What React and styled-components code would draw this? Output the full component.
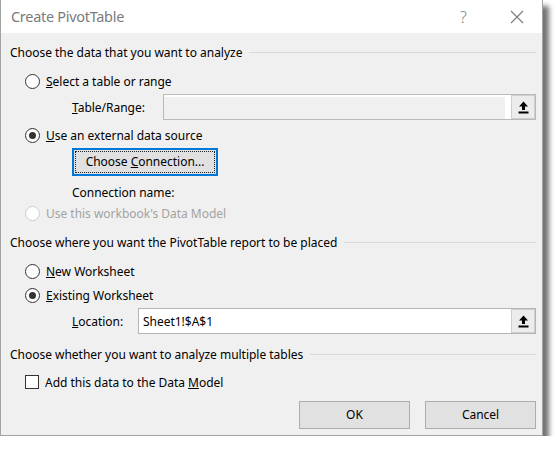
import React from "react";
import styled, { createGlobalStyle } from "styled-components";

const Global = createGlobalStyle`
  html, body { margin: 0; padding: 0; background: #ffffff; }
  body { font-family: "Noto Sans", "Open Sans", sans-serif; }
`;

const Dialog = styled.div`
  width: 541px;
  height: 435px;
  background: #f0f0f0;
  border: 1px solid #a3a3a3;
  border-top: none;
  box-shadow: 6px 6px 5px rgba(0, 0, 0, 0.55);
  display: flex;
  flex-direction: column;
  font-size: 12px;
  color: #000;
`;

const TitleBar = styled.div`
  height: 33px;
  background: #ffffff;
  display: flex;
  align-items: center;
  padding-left: 10px;
  flex-shrink: 0;
`;

const Title = styled.div`
  flex: 1;
  font-size: 14.5px;
  color: #7b7b7b;
  letter-spacing: -0.3px;
  padding-bottom: 1px;
`;

const Help = styled.div`
  width: 8px;
  font-size: 16px;
  color: #7b7b7b;
  margin-right: 42px;
  font-weight: 300;
`;

const Close = styled.div`
  width: 14px;
  height: 14px;
  margin-right: 18px;
  display: flex;
`;

const Body = styled.div`
  display: flex;
  flex-direction: column;
  padding: 0 6px 0 9px;
  letter-spacing: -0.02px;
`;

const SectionHeader = styled.div`
  height: 20px;
  margin-top: ${(p) => p.$mt}px;
  display: flex;
  align-items: center;
  gap: 7px;
  &::after {
    content: "";
    flex: 1;
    height: 1px;
    background: #dadada;
    margin-top: 1px;
  }
`;

const OptionRow = styled.label`
  height: 20px;
  margin-top: ${(p) => p.$mt}px;
  padding-left: 15px;
  display: flex;
  align-items: center;
  gap: 6px;
  color: ${(p) => (p.$disabled ? "#a3a3a3" : "#000")};
`;

const Radio = styled.span`
  width: 13px;
  height: 13px;
  border-radius: 50%;
  border: 1px solid ${(p) => (p.$disabled ? "#cccccc" : "#333333")};
  background: #ffffff;
  display: flex;
  align-items: center;
  justify-content: center;
  flex-shrink: 0;
  &::after {
    content: "";
    width: 7px;
    height: 7px;
    border-radius: 50%;
    background: #333333;
    display: ${(p) => (p.$checked ? "block" : "none")};
  }
`;

const Checkbox = styled.span`
  width: 12px;
  height: 12px;
  border: 1px solid #333333;
  background: #ffffff;
  flex-shrink: 0;
`;

const FieldRow = styled.div`
  height: 26px;
  margin-top: ${(p) => p.$mt}px;
  padding-left: 62px;
  display: flex;
  align-items: center;
`;

const FieldLabel = styled.span`
  width: ${(p) => p.$w}px;
  flex-shrink: 0;
`;

const InputFrame = styled.div`
  flex: 1;
  height: 26px;
  box-sizing: border-box;
  border: 1px solid ${(p) => (p.$disabled ? "#b9b9b9" : "#b4b4b4")};
  background: ${(p) => (p.$disabled ? "#f0f0f0" : "#ffffff")};
  display: flex;
  align-items: stretch;
`;

const InputText = styled.div`
  flex: 1;
  display: flex;
  align-items: center;
  padding-left: 4px;
  border-right: ${(p) => (p.$disabled ? "6px solid #ffffff" : "none")};
  border-top: ${(p) => (p.$disabled ? "2px solid #ffffff" : "none")};
`;

const RefButton = styled.div`
  width: 24px;
  box-sizing: border-box;
  border: 1px solid #cfcfcf;
  background: #ececec;
  display: flex;
  align-items: center;
  justify-content: center;
`;

const ConnectionButton = styled.div`
  width: 146px;
  height: 28px;
  margin-top: 3px;
  margin-left: 62px;
  box-sizing: border-box;
  border: 2px solid #0078d7;
  background: #e1e1e1;
  padding: 1px;
  display: flex;
`;

const FocusRect = styled.div`
  flex: 1;
  border: 1px dotted #222;
  display: flex;
  align-items: center;
  justify-content: center;
  padding-bottom: 1px;
`;

const PlainRow = styled.div`
  height: 20px;
  margin-top: ${(p) => p.$mt}px;
  padding-left: 62px;
  display: flex;
  align-items: center;
`;

const Footer = styled.div`
  margin-top: 9px;
  display: flex;
  justify-content: flex-end;
  gap: 15px;
`;

const DlgButton = styled.div`
  width: 111px;
  height: 28px;
  box-sizing: border-box;
  border: 1px solid #adadad;
  background: #e1e1e1;
  display: flex;
  align-items: center;
  justify-content: center;
  padding-bottom: 1px;
`;

const UpIcon = () => (
  <svg width="11" height="13" viewBox="0 0 11 13">
    <path d="M5.5 0.5 L10 5.5 H7 V9 H4 V5.5 H1 Z" fill="#000" />
    <rect x="0.5" y="10.5" width="10" height="2" fill="#000" />
  </svg>
);

const CloseIcon = () => (
  <svg width="14" height="14" viewBox="0 0 14 14">
    <path d="M1 1 L13 13 M13 1 L1 13" stroke="#7b7b7b" strokeWidth="1.1" fill="none" />
  </svg>
);

export default function App() {
  return (
    <>
      <Global />
      <Dialog>
        <TitleBar>
          <Title>Create PivotTable</Title>
          <Help>?</Help>
          <Close>
            <CloseIcon />
          </Close>
        </TitleBar>
        <Body>
          <SectionHeader $mt={9}>Choose the data that you want to analyze</SectionHeader>
          <OptionRow $mt={9}>
            <Radio />
            <span>
              <u>S</u>elect a table or range
            </span>
          </OptionRow>
          <FieldRow $mt={3}>
            <FieldLabel $w={91}>
              <u>T</u>able/Range:
            </FieldLabel>
            <InputFrame $disabled>
              <InputText $disabled />
              <RefButton>
                <UpIcon />
              </RefButton>
            </InputFrame>
          </FieldRow>
          <OptionRow $mt={5}>
            <Radio $checked />
            <span>
              <u>U</u>se an external data source
            </span>
          </OptionRow>
          <ConnectionButton>
            <FocusRect>
              <span>
                Choose <u>C</u>onnection...
              </span>
            </FocusRect>
          </ConnectionButton>
          <PlainRow $mt={6}>Connection name:</PlainRow>
          <OptionRow $mt={1} $disabled>
            <Radio $disabled />
            <span>Use this workbook's Data Model</span>
          </OptionRow>
          <SectionHeader $mt={9}>Choose where you want the PivotTable report to be placed</SectionHeader>
          <OptionRow $mt={9}>
            <Radio />
            <span>
              <u>N</u>ew Worksheet
            </span>
          </OptionRow>
          <OptionRow $mt={4}>
            <Radio $checked />
            <span>
              <u>E</u>xisting Worksheet
            </span>
          </OptionRow>
          <FieldRow $mt={3}>
            <FieldLabel $w={66}>
              <u>L</u>ocation:
            </FieldLabel>
            <InputFrame>
              <InputText>Sheet1!$A$1</InputText>
              <RefButton>
                <UpIcon />
              </RefButton>
            </InputFrame>
          </FieldRow>
          <SectionHeader $mt={10}>Choose whether you want to analyze multiple tables</SectionHeader>
          <OptionRow $mt={8}>
            <Checkbox />
            <span>
              Add this data to the Data <u>M</u>odel
            </span>
          </OptionRow>
          <Footer>
            <DlgButton>OK</DlgButton>
            <DlgButton>Cancel</DlgButton>
          </Footer>
        </Body>
      </Dialog>
    </>
  );
}
